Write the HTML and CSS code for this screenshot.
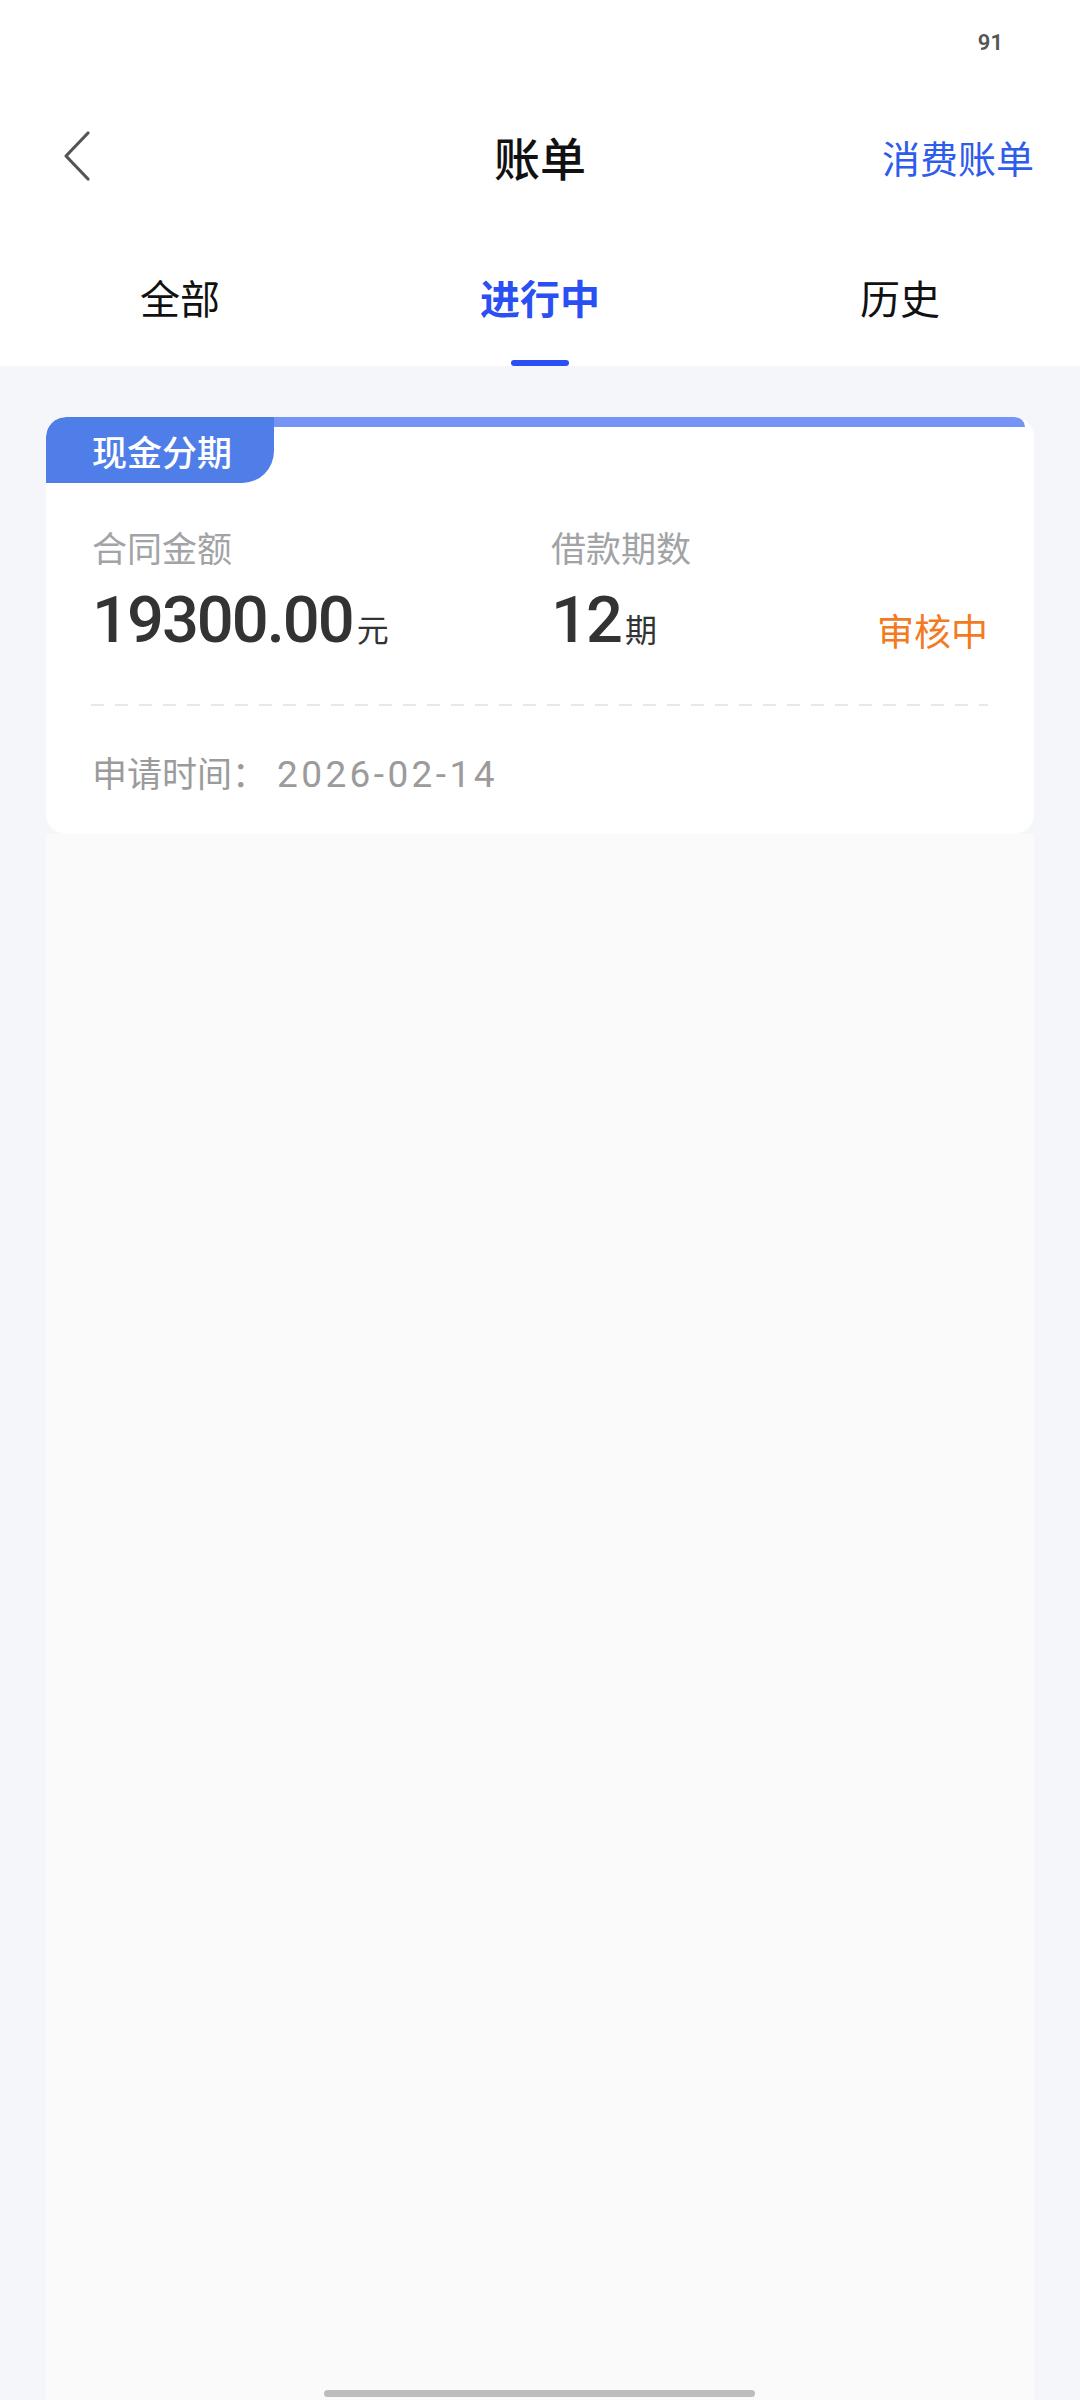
FILE: index.html
```html
<!DOCTYPE html>
<html lang="zh-CN">
<head>
  <meta charset="UTF-8" />
  <title>账单</title>
  <link rel="stylesheet" href="styles.css">
</head>
<body>

  <!-- 顶部 -->
  <div class="header">
    <div class="status"><span class="battery">91</span></div>

    <div class="nav">
      <a class="back" href="#">
        <svg width="30" height="52" viewBox="0 0 30 52">
          <polyline points="26,3 4,26 26,49" fill="none" stroke="#555" stroke-width="3.2" stroke-linecap="round" stroke-linejoin="round" />
        </svg>
      </a>
      <div class="title">账单</div>
      <a class="nav-link" href="#">消费账单</a>
    </div>

    <div class="tabs">
      <div class="tab"><span>全部</span><i></i></div>
      <div class="tab active"><span>进行中</span><i></i></div>
      <div class="tab"><span>历史</span><i></i></div>
    </div>
  </div>

  <!-- 列表 -->
  <div class="list">
    <div class="card">
      <div class="card-top">
        <div class="tag">现金分期</div>
        <div class="strip"></div>
      </div>

      <div class="card-body">
        <div class="cell">
          <div class="label">合同金额</div>
          <div class="value">19300.00<small>元</small></div>
        </div>
        <div class="cell">
          <div class="label">借款期数</div>
          <div class="value">12<small>期</small></div>
        </div>
        <div class="state">审核中</div>
      </div>

      <div class="dash"></div>

      <div class="apply-time">申请时间：<span>2026-02-14</span></div>
    </div>

    <div class="rest"></div>
  </div>

  <div class="home-bar"></div>

</body>
</html>
```

FILE: styles.css
```css
html, body {
  margin: 0;
  padding: 0;
}

body {
  width: 1080px;
  min-height: 2400px;
  display: flex;
  flex-direction: column;
  background: #f5f6fa;
  font-family: Roboto, "Noto Sans CJK SC", sans-serif;
  color: #111;
  position: relative;
}

/* 顶部 */
.header {
  background: #fff;
}

.status {
  height: 84px;
  display: flex;
  justify-content: flex-end;
  align-items: center;
  padding-right: 77px;
}

.battery {
  font-size: 22px;
  font-weight: 600;
  color: #555;
}

.nav {
  height: 144px;
  padding: 0 46px 6px 62px;
  display: flex;
  align-items: center;
  justify-content: space-between;
  position: relative;
}

.back {
  display: flex;
  width: 120px;
}

.title {
  position: absolute;
  left: 0;
  right: 0;
  text-align: center;
  font-family: "Noto Sans CJK SC", sans-serif;
  font-size: 46px;
  font-weight: 500;
  color: #111;
  pointer-events: none;
}

.nav-link {
  font-family: "Noto Sans CJK SC", sans-serif;
  font-size: 38px;
  color: #2e5ceb;
  text-decoration: none;
}

.tabs {
  height: 132px;
  display: grid;
  grid-template-columns: 1fr 1fr 1fr;
}

.tab {
  display: flex;
  flex-direction: column;
  align-items: center;
  justify-content: space-between;
  padding-top: 37px;
  font-family: "Noto Sans CJK SC", sans-serif;
  font-size: 40px;
  line-height: 52px;
  color: #111;
}

.tab i {
  width: 58px;
  height: 6px;
  border-radius: 3px;
}

.tab.active {
  color: #2a4ff2;
  font-weight: 700;
}

.tab.active i {
  background: #2a4ff2;
}

/* 列表 */
.list {
  flex: 1;
  display: flex;
  flex-direction: column;
  margin: 51px 46px 0;
}

.card {
  background: #fff;
  border-radius: 20px;
  padding-bottom: 37px;
  overflow: hidden;
}

.card-top {
  display: flex;
  height: 66px;
}

.tag {
  width: 228px;
  display: flex;
  align-items: center;
  justify-content: center;
  padding-left: 4px;
  box-sizing: border-box;
  background: #4f7ee9;
  border-radius: 20px 0 32px 0;
  color: #fff;
  font-family: "Noto Sans CJK SC", sans-serif;
  font-size: 35px;
  font-weight: 500;
}

.strip {
  flex: 1;
  height: 10px;
  margin-right: 9px;
  background: #7694f6;
  border-radius: 0 10px 0 0;
}

.card-body {
  display: grid;
  grid-template-columns: 459px 1fr auto;
  align-items: end;
  padding: 42px 46px 0;
}

.label {
  font-family: "Noto Sans CJK SC", sans-serif;
  font-size: 35px;
  line-height: 44px;
  color: #a1a3a6;
}

.value {
  margin-top: 19px;
  font-size: 65px;
  line-height: 64px;
  letter-spacing: -2px;
  color: #333;
  font-weight: 500;
}

.value small {
  font-family: "Noto Sans CJK SC", sans-serif;
  font-size: 32px;
  font-weight: 400;
  letter-spacing: 0;
  margin-left: 4px;
}

.state {
  font-family: "Noto Sans CJK SC", sans-serif;
  font-size: 37px;
  line-height: 50px;
  color: #f37b1f;
  padding-bottom: 5px;
}

.dash {
  height: 2px;
  margin: 44px 46px 0 45px;
  background-image: linear-gradient(to right, #e8e8e8 13px, transparent 13px);
  background-size: 24px 2px;
}

.apply-time {
  margin-top: 44px;
  padding-left: 46px;
  font-family: "Noto Sans CJK SC", sans-serif;
  font-size: 35px;
  line-height: 44px;
  color: #9b9b9b;
}

.apply-time span {
  font-family: Roboto, sans-serif;
  font-size: 37px;
  letter-spacing: 3.4px;
  margin-left: 10px;
}

.rest {
  flex: 1;
  background: #fafafa;
}

.home-bar {
  position: absolute;
  left: 324px;
  bottom: 3px;
  width: 431px;
  height: 7px;
  border-radius: 4px;
  background: #bdbdbd;
}
```
